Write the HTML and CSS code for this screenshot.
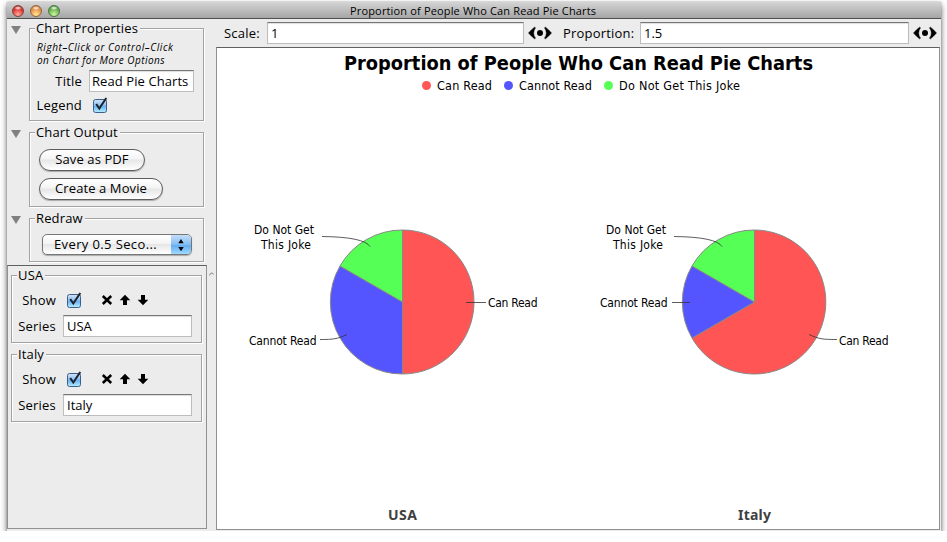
FILE: index.html
```html
<!DOCTYPE html>
<html lang="en">
<head>
<meta charset="utf-8">
<title>Proportion of People Who Can Read Pie Charts</title>
<link rel="stylesheet" href="styles.css">
</head>
<body>
<svg class="defs" width="0" height="0">
  <defs>
    <linearGradient id="aqua" x1="0" y1="0" x2="0" y2="1">
      <stop offset="0" stop-color="#d4e4f6"/><stop offset=".45" stop-color="#8fc2f2"/><stop offset=".5" stop-color="#68adf0"/><stop offset="1" stop-color="#b5f0ff"/>
    </linearGradient>
    <symbol id="check" viewBox="0 0 18 18">
      <rect x="2.5" y="3.5" width="13" height="13" rx="2" fill="url(#aqua)" stroke="#3c5f8c"/>
      <path d="M5.200 8 L8.3 12.500 L15.300 2" fill="none" stroke="#1c2530" stroke-width="2.1"/>
    </symbol>
    <symbol id="cross" viewBox="0 0 12 12"><path d="M1.8 2 L10.2 10 M10.2 2 L1.8 10" stroke="#000" stroke-width="2.5"/></symbol>
    <symbol id="up" viewBox="0 0 12 12"><path d="M6 .7 L11.3 6.3 H8 V11 H4 V6.3 H.7 Z"/></symbol>
    <symbol id="down" viewBox="0 0 12 12"><path d="M6 11.3 L.7 5.7 H4 V1 H8 V5.7 H11.3 Z"/></symbol>
    <symbol id="scrub" viewBox="0 0 24 14">
      <path d="M6.500 1.200 Q3.5 3.5 .5 7 Q3.5 10.5 6.500 12.800 L7.500 12.200 Q5.600 9.5 5.600 7 Q5.600 4.500 7.500 1.800 Z M17.500 1.200 Q20.500 3.500 23.500 7 Q20.500 10.500 17.500 12.800 L16.500 12.200 Q18.400 9.500 18.400 7 Q18.400 4.500 16.500 1.800 Z" stroke="#000" stroke-width=".5"/>
      <circle cx="12" cy="7" r="3"/>
    </symbol>
  </defs>
</svg>
<div class="window">
  <header class="titlebar">
    <div class="lights"><i class="light red"></i><i class="light amber"></i><i class="light green"></i></div>
    <span class="caption">Proportion of People Who Can Read Pie Charts</span>
  </header>
  <div class="body">
    <aside class="side">
      <div class="props">
        <div class="prop"><i class="tri"></i>
          <section class="group g-props">
            <h2>Chart Properties</h2>
            <p class="note"><span class="n1">Right–Click or Control–Click</span><br><span class="n2">on Chart for More Options</span></p>
            <div class="row title-row"><label>Title</label><div class="field">Read Pie Charts</div></div>
            <div class="row legend-row"><label>Legend</label><svg class="check"><use href="#check"/></svg></div>
          </section>
        </div>
        <div class="prop"><i class="tri"></i>
          <section class="group g-output">
            <h2>Chart Output</h2>
            <div class="buttons"><div class="btn pdf">Save as PDF</div><div class="btn movie">Create a Movie</div></div>
          </section>
        </div>
        <div class="prop"><i class="tri"></i>
          <section class="group g-redraw">
            <h2>Redraw</h2>
            <div class="select"><span>Every 0.5 Seco...</span><svg class="stepper" viewBox="0 0 20 20"><path d="M10 4 L12.700 8.300 H7.300 Z M10 16.300 L7.300 12 H12.700 Z"/></svg></div>
          </section>
        </div>
      </div>
      <div class="list">
        <section class="group series">
          <h2 class="usa">USA</h2>
          <div class="row show"><label>Show</label><svg class="check"><use href="#check"/></svg><svg class="ico first"><use href="#cross"/></svg><svg class="ico"><use href="#up"/></svg><svg class="ico"><use href="#down"/></svg></div>
          <div class="row name"><label>Series</label><div class="field">USA</div></div>
        </section>
        <section class="group series">
          <h2>Italy</h2>
          <div class="row show"><label>Show</label><svg class="check"><use href="#check"/></svg><svg class="ico first"><use href="#cross"/></svg><svg class="ico"><use href="#up"/></svg><svg class="ico"><use href="#down"/></svg></div>
          <div class="row name"><label>Series</label><div class="field">Italy</div></div>
        </section>
      </div>
    </aside>
    <div class="divider"><svg viewBox="0 0 9 8"><path d="M2.500 5.500 Q3 3 5 3 Q6 3 6.500 4.500" fill="none" stroke="#888"/></svg></div>
    <main class="main">
      <div class="toolbar">
        <label class="l1">Scale:</label><div class="field f1">1</div><svg class="scrub"><use href="#scrub"/></svg>
        <label class="l2">Proportion:</label><div class="field f2">1.5</div><svg class="scrub"><use href="#scrub"/></svg>
      </div>
      <svg class="chart" viewBox="217 48 722 481">
        <text class="heading" x="344" y="70" textLength="469" lengthAdjust="spacingAndGlyphs">Proportion of People Who Can Read Pie Charts</text>
        <circle cx="426.500" cy="85.500" r="4.500" fill="#f55"/><text x="437" y="90" textLength="55">Can Read</text>
        <circle cx="508.500" cy="85.500" r="4.500" fill="#55f"/><text x="519" y="90" textLength="73">Cannot Read</text>
        <circle cx="608.500" cy="85.500" r="4.500" fill="#5f5"/><text x="619" y="90" textLength="121">Do Not Get This Joke</text>
        <g class="slices">
          <path fill="#f55" d="M402.500 302 V230 A71.500 72 0 0 1 402.500 374 Z"/>
          <path fill="#55f" d="M402.500 302 V374 A72 72 0 0 1 340 266 Z"/>
          <path fill="#5f5" d="M402.500 302 L340 266 A72 72 0 0 1 402.500 230 Z"/>
          <path fill="#f55" d="M754.500 302 V230 A71.700 72 0 1 1 692 338 Z"/>
          <path fill="#55f" d="M754.500 302 L692 338 A72 72 0 0 1 692 266 Z"/>
          <path fill="#5f5" d="M754.500 302 L692 266 A72 72 0 0 1 754.500 230 Z"/>
        </g>
        <g class="leaders">
          <path d="M322 236.500 Q364 237 370 246.500 M466 302.500 H486 M320 339.500 C334 339.500 337 339 347 334.500"/>
          <path d="M674 236.500 Q716 237 722 246.500 M672 302.500 H690 M809 334.500 C819 339 822 339.500 837 339.500"/>
        </g>
        <g class="labels">
          <text x="254" y="234" textLength="60">Do Not Get</text><text x="261" y="249" textLength="50">This Joke</text>
          <text x="488" y="307" textLength="49.500">Can Read</text><text x="249" y="345" textLength="67.500">Cannot Read</text>
          <text x="606" y="234" textLength="60">Do Not Get</text><text x="613" y="249" textLength="50">This Joke</text>
          <text x="839" y="345" textLength="49.500">Can Read</text><text x="600" y="307" textLength="67.500">Cannot Read</text>
        </g>
        <text class="name" x="388" y="520" textLength="29">USA</text>
        <text class="name" x="738" y="520" textLength="33">Italy</text>
      </svg>
    </main>
  </div>
</div>
</body>
</html>
```
FILE: styles.css
```css
* { box-sizing: border-box; }
body { margin: 0; padding: 2px 0 0 7px; background: #fff; overflow: hidden; font: 13px/16px "Open Sans", sans-serif; color: #000; }
.defs { position: absolute; }
svg { display: block; flex: none; }
.window { width: 934px; height: 529px; display: flex; flex-direction: column; background: #ececec; box-shadow: 0 0 1px #888, 0 3px 6px rgba(0,0,0,.65); }
.titlebar { height: 17px; flex: none; display: grid; align-items: center; background: linear-gradient(#d4d4d4, #a6a6a6); border-bottom: 1px solid #505050; }
.titlebar > * { grid-area: 1 / 1; }
.lights { display: flex; gap: 6px; padding-left: 5px; }
.light { width: 12px; height: 12px; border-radius: 50%; border: 1px solid #7a4840; }
.red { background: radial-gradient(ellipse 4px 2px at 50% 20%, #fff, transparent), radial-gradient(circle at 50% 85%, #ffaaa0, #e0342c 60%, #a01c18); }
.amber { border-color: #976538; background: radial-gradient(ellipse 4px 2px at 50% 20%, #fff, transparent), radial-gradient(circle at 50% 85%, #ffe898, #e5914a 60%, #b85e20); }
.green { border-color: #4c7844; background: radial-gradient(ellipse 4px 2px at 50% 20%, #fff, transparent), radial-gradient(circle at 50% 85%, #d0f8a0, #68b050 60%, #39802c); }
.caption { margin-left: 343px; font-size: 11px; letter-spacing: .16px; white-space: nowrap; padding-top: 1px; }
.body { flex: 1; display: flex; min-height: 0; }
.side { width: 200px; display: flex; flex-direction: column; }
.props { height: 246px; flex: none; padding: 9px 3px 0 4px; display: flex; flex-direction: column; gap: 11px; }
.prop { display: flex; }
.tri { width: 18px; flex: none; height: 6px; margin-top: -2px; }
.tri::before { content: ""; display: block; width: 0; border: 5px solid transparent; border-top: 8px solid #808080; border-bottom: 0; }
.group { flex: 1; border: 1px solid #a2a2a2; box-shadow: 1px 1px 0 #fff, inset 1px 1px 0 #fff; }
.group h2 { width: max-content; margin: -9px 0 0 5px; padding: 0 2px 0 1px; height: 16px; background: #ececec; font: 13px/16px "Open Sans", sans-serif; letter-spacing: .15px; }
.g-props { height: 93px; }
.g-output { height: 75px; }
.g-redraw { height: 44px; }
.note { margin: 5px 0 0 7px; font-size: 10px; line-height: 13px; font-style: italic; white-space: nowrap; font-weight: 500; }
.n1 { letter-spacing: .58px; }
.n2 { letter-spacing: .46px; }
.row { display: flex; align-items: center; }
.row label { text-align: right; letter-spacing: .2px; }
.field { height: 22px; background: #fff; border: 1px solid #bdbdbd; border-top: 1px solid #777; box-shadow: inset 0 1px 1px #ddd; padding: 2px 0 0 3px; white-space: nowrap; overflow: hidden; }
.title-row { margin-top: 3px; }
.title-row label, .legend-row label { width: 52px; }
.title-row .field { width: 105px; margin-left: 7px; padding-left: 2px; letter-spacing: .08px; }
.legend-row { margin-top: 4px; }
.legend-row .check { margin-left: 9px; }
.check { width: 18px; height: 18px; }
.buttons { display: flex; flex-direction: column; gap: 7px; padding: 9px 0 0 9px; }
.btn { height: 22px; border: 1px solid #5d5d5d; border-radius: 11px; text-align: center; line-height: 19px; background: linear-gradient(#fff, #f4f4f4 45%, #e6e6e6 50%, #fff); box-shadow: 0 1px 1px #aaa; }
.pdf { width: 106px; letter-spacing: .1px; }
.movie { width: 124px; letter-spacing: .1px; }
.select { margin: 8px 0 0 12px; width: 150px; height: 21px; display: flex; border: 1px solid #777; border-radius: 5px; overflow: hidden; background: linear-gradient(#fff, #f4f4f4 45%, #e6e6e6 50%, #fff); box-shadow: 0 1px 1px #aaa; }
.select span { width: 128px; padding-left: 11px; line-height: 19px; letter-spacing: .38px; }
.stepper { width: 20px; height: 20px; background: linear-gradient(#c4def8, #83bdf4 48%, #62aaf0 50%, #a5e0ff); }
.list { flex: 1; border: 1px solid #909090; border-top-color: #606060; margin-bottom: 2px; padding: 9px 4px 0 3px; display: flex; flex-direction: column; gap: 11px; }
.series { flex: none; height: 68px; }
.series h2 { margin-left: 5px; }
.show { height: 18px; margin-top: 8px; }
.show label, .name label { width: 44px; }
.show .check { margin-left: 9px; }
.ico { width: 12px; height: 12px; margin-right: 6px; }
.ico.first { margin-left: 18px; }
.name { margin-top: 6px; }
.name .field { width: 129px; margin-left: 7px; }
.divider { width: 9px; padding-top: 251px; }
.divider svg { width: 9px; height: 8px; }
.main { flex: 1; display: flex; flex-direction: column; }
.toolbar { height: 28px; flex: none; display: flex; align-items: center; padding-left: 8px; }
.toolbar label { letter-spacing: .2px; }
.l1 { width: 43px; }
.l2 { width: 77px; margin-left: 11px; }
.f1 { width: 257px; }
.f2 { width: 269px; }
.scrub { width: 24px; height: 14px; margin-left: 4px; }
.chart { width: 724px; height: 483px; background: #fff; border: 1px solid #909090; border-top-color: #606060; font-family: "DejaVu Sans Condensed", "DejaVu Sans", sans-serif; font-stretch: condensed; font-size: 12.500px; }
.heading { font-size: 20px; font-weight: bold; }
.slices { stroke: #888; stroke-width: 1; }
.leaders { fill: none; stroke: #333; stroke-width: .8; }
.labels { font-size: 12px; }
.chart .name { font: bold 14px "Noto Sans", sans-serif; fill: #404040; }
```
